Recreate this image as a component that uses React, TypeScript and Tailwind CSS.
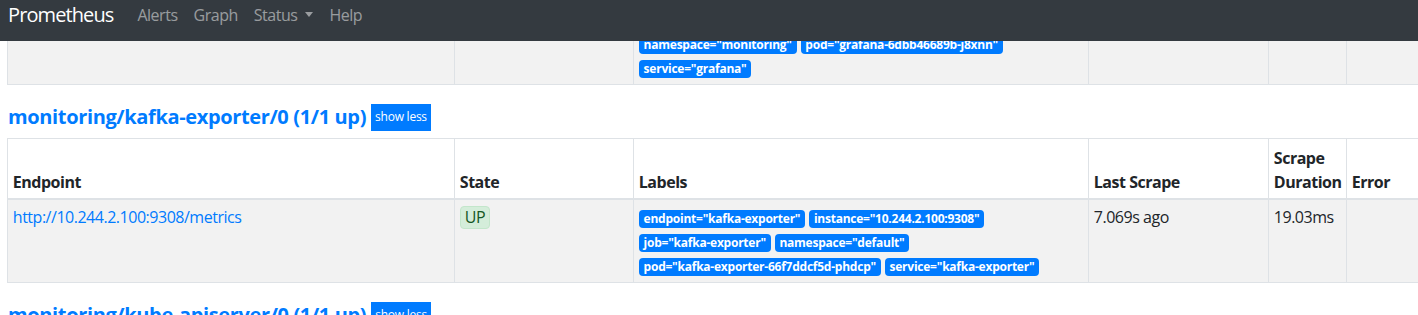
import React from 'react'

type Target = {
  endpoint: string
  labels: string[]
  lastScrape: string
  duration: string
}

const grafanaRow: Target = {
  endpoint: 'http://10.244.1.12:3000/metrics',
  labels: [
    'endpoint="http"',
    'instance="10.244.1.12:3000"',
    'job="grafana"',
    'namespace="monitoring"',
    'pod="grafana-6dbb46689b-j8xnn"',
    'service="grafana"',
  ],
  lastScrape: '',
  duration: '',
}

const kafkaRow: Target = {
  endpoint: 'http://10.244.2.100:9308/metrics',
  labels: [
    'endpoint="kafka-exporter"',
    'instance="10.244.2.100:9308"',
    'job="kafka-exporter"',
    'namespace="default"',
    'pod="kafka-exporter-66f7ddcf5d-phdcp"',
    'service="kafka-exporter"',
  ],
  lastScrape: '7.069s ago',
  duration: '19.03ms',
}

function Cols() {
  return (
    <colgroup>
      <col className="w-[447px]" />
      <col className="w-[179px]" />
      <col className="w-[455px]" />
      <col className="w-[180px]" />
      <col className="w-[78px]" />
      <col className="w-[120px]" />
    </colgroup>
  )
}

function Row({ t }: { t: Target }) {
  const td = 'border border-[#dee2e6] p-[0.3rem] align-top'
  return (
    <tr className="bg-[#f2f2f2]">
      <td className={td}>
        <a href="#" className="text-[#007bff]">{t.endpoint}</a>
      </td>
      <td className={td}>
        <span className="inline-block rounded-[4px] border border-[#c3e6cb] bg-[#d4edda] px-[4px] leading-[21px] text-[#155724]">
          UP
        </span>
      </td>
      <td className={td}>
        {t.labels.map((l) => (
          <span
            key={l}
            className="mr-1 inline-block rounded-[4px] bg-[#007bff] px-[0.4em] py-[0.25em] text-[12px] font-bold leading-none tracking-[-0.02em] text-white"
          >
            {l}
          </span>
        ))}
      </td>
      <td className={td}>{t.lastScrape}</td>
      <td className={td}>{t.duration}</td>
      <td className={td}></td>
    </tr>
  )
}

function Heading({ title }: { title: string }) {
  return (
    <div className="mt-[19px] mb-[7px] flex h-[27px] items-center gap-[5px] pl-[1px]">
      <a href="#" className="text-[20px] font-bold tracking-[-0.018em] text-[#007bff]">{title}</a>
      <button className="h-[27px] bg-[#007bff] px-[4px] text-[12px] tracking-[-0.02em] text-white">show less</button>
    </div>
  )
}

export default function App() {
  const th = 'border border-[#dee2e6] border-b-2 px-[0.3rem] pt-[7px] pb-[0.3rem] text-left align-bottom font-bold'
  return (
    <div
      className="relative h-[315px] overflow-hidden bg-white text-[16px] leading-6 tracking-[-0.03em] text-[#212529]"
      style={{ fontFamily: '"Open Sans", "Noto Sans", sans-serif' }}
    >
      {/* fixed navbar */}
      <nav className="fixed inset-x-0 top-0 z-10 flex h-[41px] items-center bg-[#343a40] px-2 pb-[12px]">
        <span className="mr-[24px] text-[20px] tracking-[-0.045em] text-white">Prometheus</span>
        <div className="flex items-center gap-[16px] text-[rgba(255,255,255,0.5)]">
          <span>Alerts</span>
          <span>Graph</span>
          <span className="flex items-center">
            Status
            <span className="ml-[8px] h-0 w-0 border-x-[4px] border-t-[5px] border-x-transparent border-t-[rgba(255,255,255,0.5)]" />
          </span>
          <span>Help</span>
        </div>
      </nav>

      <div className="px-[7px] pt-[1px]">
        <table className="w-[1459px] table-fixed border-collapse">
          <Cols />
          <tbody>
            <Row t={grafanaRow} />
          </tbody>
        </table>

        <Heading title="monitoring/kafka-exporter/0 (1/1 up)" />
        <table className="w-[1459px] table-fixed border-collapse">
          <Cols />
          <thead>
            <tr>
              <th className={th}>Endpoint</th>
              <th className={th}>State</th>
              <th className={th}>Labels</th>
              <th className={th}>Last Scrape</th>
              <th className={th}>Scrape Duration</th>
              <th className={th}>Error</th>
            </tr>
          </thead>
          <tbody>
            <Row t={kafkaRow} />
          </tbody>
        </table>

        <Heading title="monitoring/kube-apiserver/0 (1/1 up)" />
      </div>
    </div>
  )
}
